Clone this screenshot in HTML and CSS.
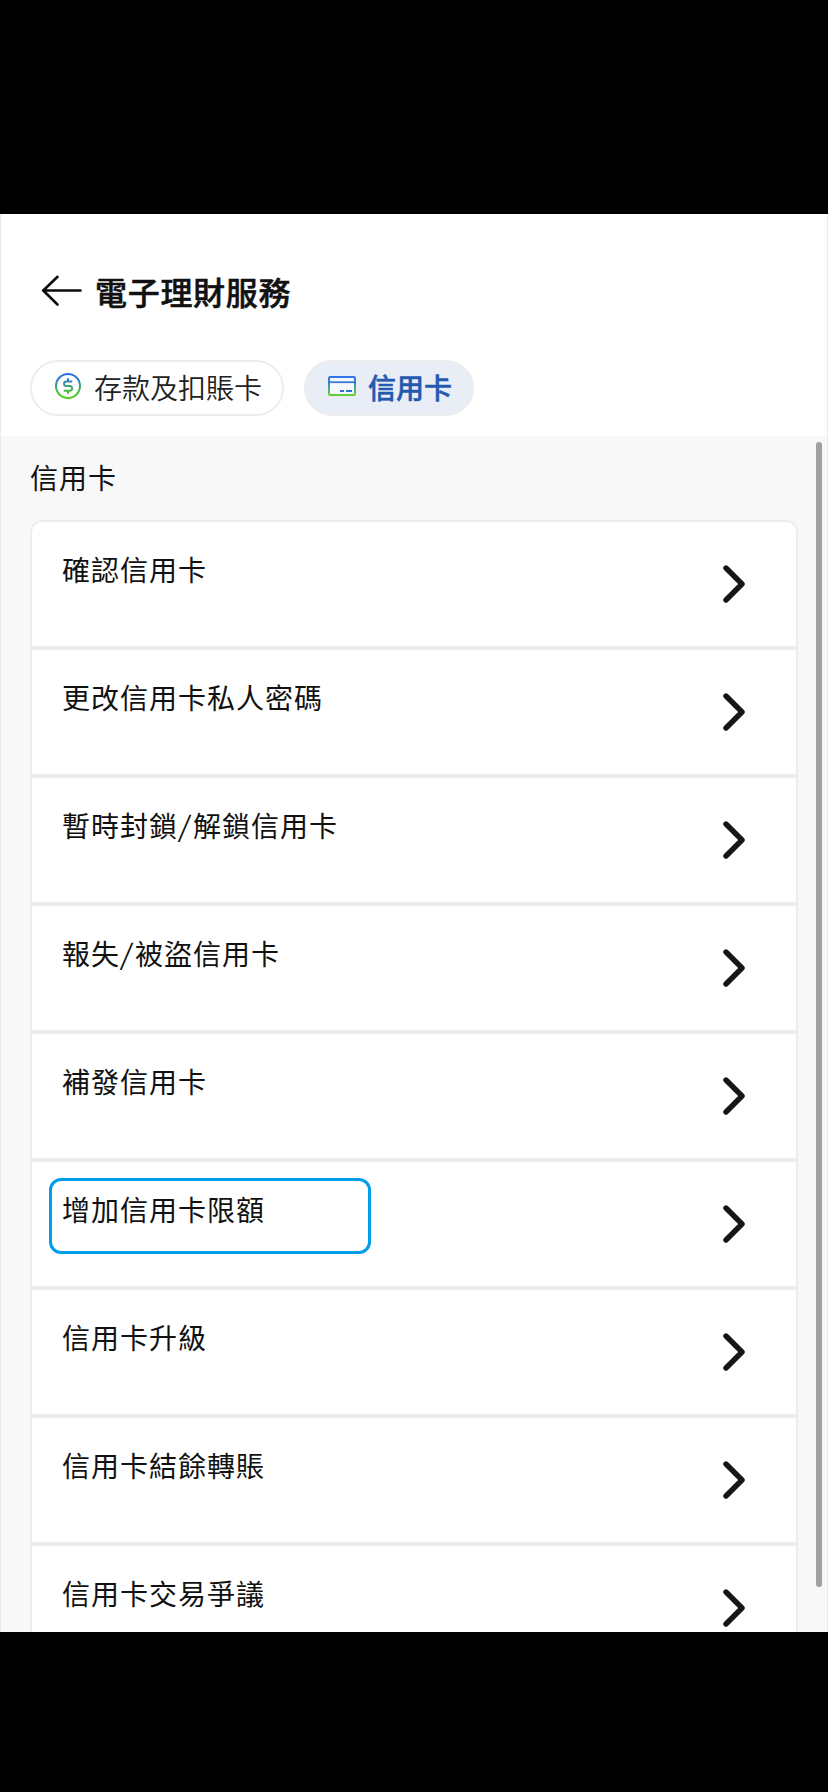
FILE: index.html
```html
<!DOCTYPE html>
<html lang="zh-Hant">
<head>
<meta charset="utf-8">
<title>電子理財服務</title>
<link rel="stylesheet" href="styles.css">
</head>
<body>
<svg class="defs" width="0" height="0" aria-hidden="true">
  <defs>
    <linearGradient id="brand-coin" gradientUnits="userSpaceOnUse" x1="0" y1="0" x2="0" y2="26"><stop offset="0" stop-color="#256fe8"/><stop offset=".2" stop-color="#2b78d8"/><stop offset=".75" stop-color="#4fc232"/><stop offset="1" stop-color="#58cc20"/></linearGradient>
    <linearGradient id="brand-card" gradientUnits="userSpaceOnUse" x1="0" y1="0" x2="0" y2="20"><stop offset="0" stop-color="#2f74ea"/><stop offset=".3" stop-color="#357fd2"/><stop offset=".85" stop-color="#62c84a"/><stop offset="1" stop-color="#66cc33"/></linearGradient>
    <symbol id="chevron" viewBox="0 0 22 38"><path d="M3 3 L19 19 L3 35" fill="none" stroke="#161616" stroke-width="5.400" stroke-linecap="round" stroke-linejoin="round"/></symbol>
  </defs>
</svg>
<main class="app">
  <header class="header">
    <div class="title-bar">
      <svg class="back" width="42" height="32" viewBox="0 0 42 32"><path d="M39.500 16.500H2M16.500 2.800L2.300 16.500L16.500 30.500" fill="none" stroke="#0c0c0c" stroke-width="2.600" stroke-linecap="round" stroke-linejoin="round"/></svg>
      <h1 class="title">電子理財服務</h1>
    </div>
    <nav class="tabs">
      <a class="tab">
        <svg class="coin" width="26" height="26" viewBox="0 0 26 26" fill="none" stroke="url(#brand-coin)" stroke-width="2"><circle cx="13" cy="13" r="12"/><path d="M17.300 8.500H11.300a2.250 2.250 0 0 0 0 4.500h3.500a2.350 2.350 0 0 1 0 4.700H8.800M13 5.200V8.500M13 17.700v3.100"/></svg>
        <span>存款及扣賬卡</span>
      </a>
      <a class="tab tab-active">
        <svg class="card-icon" width="28" height="20" viewBox="0 0 28 20" fill="none"><rect x="1" y="1" width="26" height="18" rx="1.200" fill="#fff" fill-opacity=".55" stroke="url(#brand-card)" stroke-width="2"/><path d="M1 6.200H27" stroke="#3679d6" stroke-width="1.800"/><path d="M12 15h4M18 15h6" stroke="#2f70e6" stroke-width="2"/></svg>
        <span>信用卡</span>
      </a>
    </nav>
  </header>
  <section class="content">
    <h2 class="section-title">信用卡</h2>
    <ul class="menu">
      <li class="row"><span>確認信用卡</span><svg class="chevron"><use href="#chevron"/></svg></li>
      <li class="row"><span>更改信用卡私人密碼</span><svg class="chevron"><use href="#chevron"/></svg></li>
      <li class="row"><span>暫時封鎖<i class="slash">/</i>解鎖信用卡</span><svg class="chevron"><use href="#chevron"/></svg></li>
      <li class="row"><span>報失<i class="slash">/</i>被盜信用卡</span><svg class="chevron"><use href="#chevron"/></svg></li>
      <li class="row"><span>補發信用卡</span><svg class="chevron"><use href="#chevron"/></svg></li>
      <li class="row row-marked"><span>增加信用卡限額</span><svg class="chevron"><use href="#chevron"/></svg></li>
      <li class="row"><span>信用卡升級</span><svg class="chevron"><use href="#chevron"/></svg></li>
      <li class="row"><span>信用卡結餘轉賬</span><svg class="chevron"><use href="#chevron"/></svg></li>
      <li class="row"><span>信用卡交易爭議</span><svg class="chevron"><use href="#chevron"/></svg></li>
    </ul>
    <div class="scrollbar"></div>
  </section>
</main>
</body>
</html>
```
FILE: styles.css
```css
*, *::before { box-sizing: border-box; }
body {
  margin: 0;
  height: 1792px;
  padding: 214px 0 160px;
  background: #000;
  color: #111;
  font: 400 28px/40px "Noto Sans CJK TC", sans-serif;
  overflow: hidden;
}
h1, h2, ul { margin: 0; padding: 0; list-style: none; }
svg { flex: none; display: block; }
.defs { position: absolute; }
.app {
  height: 1418px;
  display: flex;
  flex-direction: column;
  overflow: hidden;
  background: #fff;
  border: solid #ebebeb;
  border-width: 0 1px;
}
.header {
  flex: none;
  height: 222px;
  padding: 52px 29px 0;
}
.title-bar {
  height: 48px;
  display: flex;
  align-items: center;
  gap: 12px;
  padding-left: 11px;
}
.title {
  padding-top: 2px;
  font-size: 32px;
  line-height: 48px;
  font-weight: 500;
  letter-spacing: .7px;
  -webkit-text-stroke: .5px currentColor;
}
.tabs {
  display: flex;
  gap: 20px;
  margin-top: 46px;
}
.tab {
  width: 254px;
  height: 56px;
  display: flex;
  align-items: center;
  border: 2px solid #ededed;
  border-radius: 28px;
  padding-left: 23px;
  color: #222;
  font-weight: 350;
}
.tab span { padding-bottom: 2px; }
.coin { margin: 0 13px 4px 0; }
.tab-active {
  width: 170px;
  padding-left: 22px;
  background: #e9eef6;
  color: #2459b0;
  font-weight: 500;
  -webkit-text-stroke: .5px currentColor;
}
.card-icon { margin: 0 12px 4px 0; }
.content {
  position: relative;
  flex: 1;
  min-height: 0;
  padding: 21px 29px 0;
  background: #f8f8f8;
  overflow: hidden;
}
.section-title {
  height: 63px;
  font-size: 28px;
  font-weight: 400;
  letter-spacing: 1px;
}
.menu {
  border: 2px solid #ededed;
  border-radius: 12px;
  background: #fff;
}
.row {
  position: relative;
  height: 128px;
  display: flex;
  align-items: center;
  justify-content: space-between;
  padding: 0 51px 0 30px;
  border-bottom: 4px solid #ededed;
  letter-spacing: 1px;
}
.row span { align-self: flex-start; padding-top: 27px; }
.slash {
  display: inline-block;
  padding: 0 1.5px;
  font-style: normal;
  transform: skewX(-7deg);
}
.row-marked::before {
  content: "";
  position: absolute;
  left: 17px;
  top: 16px;
  width: 322px;
  height: 76px;
  border: 3px solid #009de8;
  border-radius: 12px;
}
.chevron { width: 22px; height: 38px; }
.scrollbar {
  position: absolute;
  right: 5px;
  top: 6px;
  width: 6px;
  height: 1145px;
  border-radius: 3px;
  background: #a0a0a0;
}
```
